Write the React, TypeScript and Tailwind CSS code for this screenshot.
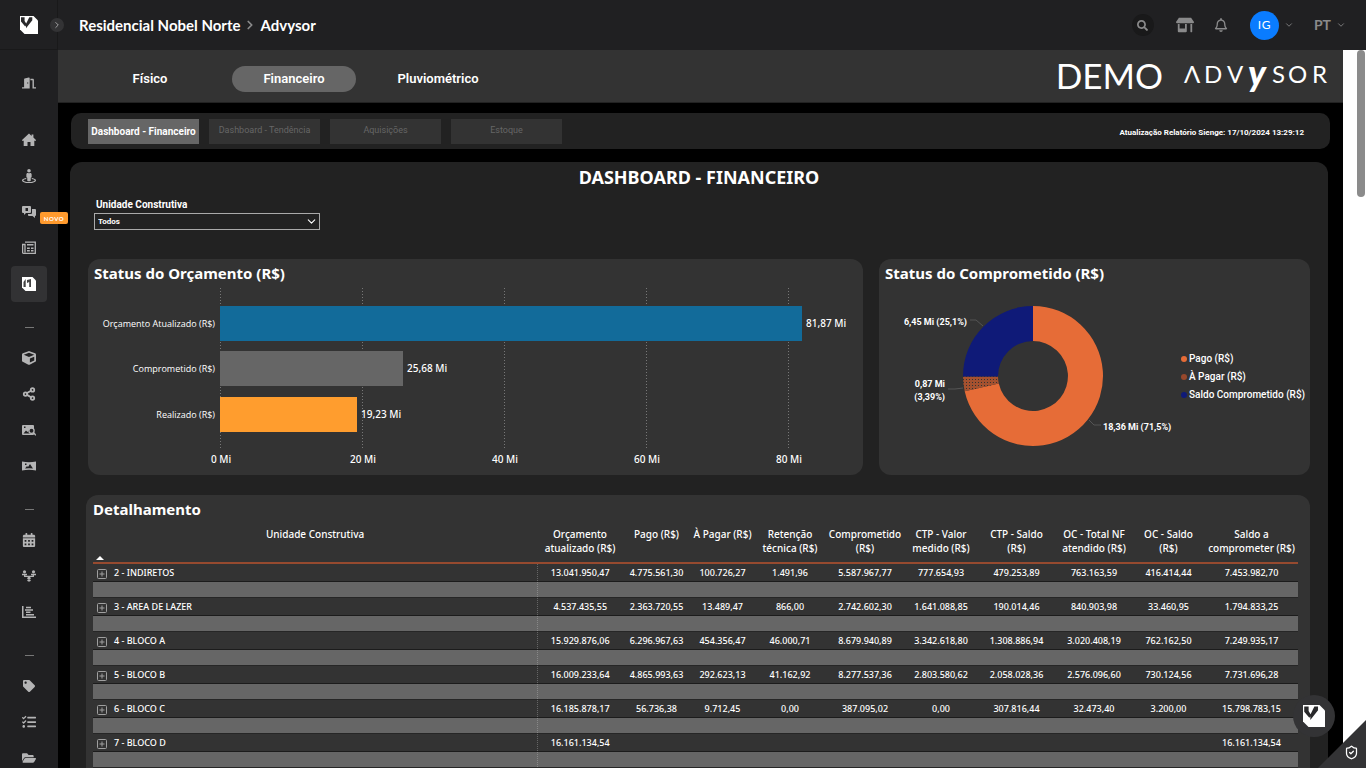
import type { ReactNode } from "react";
import {
  FaCalendarAlt,
  FaCube,
  FaDoorOpen,
  FaFolderOpen,
  FaRegBell,
  FaSearch,
  FaStoreAlt,
  FaStreetView,
  FaTag,
  FaTasks,
} from "react-icons/fa";
import { ChevronDown, ChevronRight, Share2, ShieldCheck } from "lucide-react";

const LogoMark = ({ size }: { size: number }) => (
  <svg width={size} height={size} viewBox="0 0 18 18" aria-hidden="true">
    <path d="M0 0h13.500L18 4.500V18H4.500L0 13.500z" fill="#fff" />
    <path d="M1 1.300h3.600v3.700L6.200 7.500 9.300 1.300H12.300v3L6 12.300V9.500L5.200 10.500 1 5.600z" fill="#29292b" />
  </svg>
);

const HomeIcon = () => (
  <svg width="14" height="14" viewBox="0 0 14 14" fill="currentColor" aria-hidden="true">
    <path d="M7 .6 9.600 3V1.500h1.800v3.100L14 7v.8h-1.700V13H8.500V9h-3v4H1.700V7.800H0V7z" />
  </svg>
);

const NewsIcon = () => (
  <svg width="14" height="14" viewBox="0 0 14 14" fill="none" stroke="currentColor" strokeWidth="1.300" aria-hidden="true">
    <path d="M3 1.200h10.300v11.200H1.500a.9.9 0 0 1-.9-.9V3.500H3v8" />
    <path d="M5 3.800h6.500M5 7.200h2.800M9 7.200h2.500M5 9.800h2.800M9 9.800h2.500" strokeWidth="1.500" />
  </svg>
);

const AdvysorIcon = () => (
  <svg width="14" height="14" viewBox="0 0 14 14" aria-hidden="true">
    <path d="M0 0h10.500L14 3.500V14H3.500L0 10.500z" fill="#fff" />
    <path d="M1.500 10V5l2.200-3v8zM5 3l4-1v8H7.200V5L5 6z" fill="#444" />
  </svg>
);

const ChatIcon = () => (
  <svg width="14" height="14" viewBox="0 0 14 14" fill="currentColor" aria-hidden="true">
    <path
      fillRule="evenodd"
      d="M1 1h7a1 1 0 0 1 1 1v5a1 1 0 0 1-1 1H4L2 10V8H1a1 1 0 0 1-1-1V2a1 1 0 0 1 1-1zm2.500 2v3h2.500V3z"
    />
    <path d="M10 4h3a1 1 0 0 1 1 1v5a1 1 0 0 1-1 1v2l-2.500-2H7a1 1 0 0 1-1-1V9h3a1 1 0 0 0 1-1z" />
  </svg>
);

const ImageSearchIcon = () => (
  <svg width="14" height="14" viewBox="0 0 14 14" aria-hidden="true">
    <rect y="2" width="12" height="10" rx="1" fill="currentColor" />
    <path d="M1.500 10.500 4 7.500l1.500 1.500L8 6v4.500zM2 3.500h1.500V5H2z" fill="#202022" />
    <circle cx="9.500" cy="7.800" r="2.600" fill="#202022" stroke="currentColor" strokeWidth="1.300" />
    <path d="m11.500 9.800 2.500 2.500" stroke="currentColor" strokeWidth="1.500" />
  </svg>
);

const PanoramaIcon = () => (
  <svg width="14" height="14" viewBox="0 0 14 14" aria-hidden="true">
    <path d="M0 2.500q7 1.600 14 0v9q-7-1.600-14 0z" fill="currentColor" />
    <path d="m3 9.500 2-2.500 1 1 2-3 3 4.500q-4-.4-8 0zM3 4.500h1.500V6H3z" fill="#202022" />
  </svg>
);

const NetworkIcon = () => (
  <svg width="14" height="14" viewBox="0 0 14 14" fill="currentColor" aria-hidden="true">
    <circle cx="2.500" cy="2.800" r="1.600" />
    <circle cx="11.500" cy="2.800" r="1.600" />
    <circle cx="7" cy="9.200" r="1.600" />
    <path d="M0 4.800h5v1.500H0zM9 4.800h5v1.500H9zM5 11h4l-1 1.500H6z" />
    <path d="M2.700 6v1.300h8.600V6" fill="none" stroke="currentColor" strokeWidth="1.300" />
  </svg>
);

const GanttIcon = () => (
  <svg width="14" height="14" viewBox="0 0 14 14" fill="currentColor" aria-hidden="true">
    <path d="M0 1h1.500v10.500H14V13H0zM4 1.800h5v1.500H4zM3 4.200h8v1.500H3zM4 6.600h4.500v1.500H4zM4 9h8v1.500H4z" />
  </svg>
);

type SideItem = { label: string; icon: ReactNode; active?: boolean; badge?: string };

const sideGroups: SideItem[][] = [
  [
    { label: "Início", icon: <HomeIcon /> },
    { label: "Visita virtual", icon: <FaStreetView size={14} /> },
    { label: "Mensagens", icon: <ChatIcon />, badge: "NOVO" },
    { label: "Notícias", icon: <NewsIcon /> },
    { label: "Advysor", icon: <AdvysorIcon />, active: true },
  ],
  [
    { label: "Modelos", icon: <FaCube size={14} /> },
    { label: "Compartilhar", icon: <Share2 size={14} strokeWidth={3} className="text-[#b4b4b5]" /> },
    { label: "Buscar imagens", icon: <ImageSearchIcon /> },
    { label: "Panoramas", icon: <PanoramaIcon /> },
  ],
  [
    { label: "Calendário", icon: <FaCalendarAlt size={14} /> },
    { label: "Equipe", icon: <NetworkIcon /> },
    { label: "Cronograma", icon: <GanttIcon /> },
  ],
  [
    { label: "Etiquetas", icon: <FaTag size={12} /> },
    { label: "Tarefas", icon: <FaTasks size={14} /> },
    { label: "Arquivos", icon: <FaFolderOpen size={14} /> },
  ],
];

const SideLink = ({ item }: { item: SideItem }) => (
  <a
    href="#"
    aria-label={item.label}
    className={
      item.active
        ? "relative flex size-9 items-center justify-center rounded-sm bg-[#323234]"
        : "relative flex size-9 items-center justify-center"
    }
  >
    {item.icon}
    {item.badge && (
      <span className="absolute top-[18px] left-[29px] z-10 flex h-3 w-7 items-center justify-center rounded-[2px] bg-[#ff9a2e] font-['Lato'] text-[6px] font-bold tracking-widest text-white">
        {item.badge}
      </span>
    )}
  </a>
);

const Sidebar = () => (
  <nav className="flex w-[58px] shrink-0 flex-col items-center bg-[#202022] pt-[15px] text-[#b4b4b5]">
    <a href="#" aria-label="Sair" className="mb-[21px] flex size-9 shrink-0 items-center justify-center">
      <FaDoorOpen size={14} />
    </a>
    {sideGroups.map((group, i) => (
      <div key={i} className="flex shrink-0 flex-col items-center">
        {i > 0 && (
          <div className="flex h-[38px] items-center pt-3">
            <span className="h-px w-[9px] bg-[#777]" />
          </div>
        )}
        {group.map((item) => (
          <SideLink key={item.label} item={item} />
        ))}
      </div>
    ))}
  </nav>
);

const Header = () => (
  <header className="flex h-[50px] shrink-0 items-center bg-[#202022] text-[#8a8a8b]">
    <div className="relative flex h-full w-[58px] items-center justify-center border-r border-b border-[#19191a]">
      <LogoMark size={18} />
      <button
        aria-label="Expandir menu"
        className="absolute top-[18px] -right-[7px] flex size-[14px] items-center justify-center rounded-full bg-[#333335] text-[#b4b4b5]"
      >
        <ChevronRight size={10} />
      </button>
    </div>
    <div className="ml-[21px] flex items-center gap-[3px] font-['Lato'] text-[15px] leading-5 font-bold text-white">
      <a href="#">Residencial Nobel Norte</a>
      <ChevronRight size={14} strokeWidth={3} className="text-[#8a8a8b]" />
      <span>Advysor</span>
    </div>
    <div className="mr-5 ml-auto flex items-center">
      <button aria-label="Buscar" className="flex size-[22px] items-center justify-center rounded-full bg-[#19191a]">
        <FaSearch size={11} />
      </button>
      <button aria-label="Loja" className="ml-[22px]">
        <FaStoreAlt size={18} />
      </button>
      <button aria-label="Notificações" className="ml-5">
        <FaRegBell size={14} />
      </button>
      <button aria-label="Conta" className="ml-[22px] flex items-center gap-[5px]">
        <span className="flex size-[29px] items-center justify-center rounded-full bg-[#0a7cff] font-['Lato'] text-xs tracking-wider text-white">
          IG
        </span>
        <ChevronDown size={10} />
      </button>
      <button className="ml-5 flex items-center gap-[5px] font-['Lato'] text-sm font-bold">
        PT
        <ChevronDown size={10} />
      </button>
    </div>
  </header>
);

const AdvysorLogo = () => (
  <svg
    width="146"
    height="52"
    viewBox="0 0 146 52"
    role="img"
    aria-label="Advysor"
    className="overflow-visible"
    fill="#fff"
    fontFamily="Lato, sans-serif"
    fontSize="24"
  >
    <text x="1 21 44" y="33">ΛDV</text>
    <text x="65" y="36" fontSize="36" fontWeight="900" fontStyle="italic">y</text>
    <text x="89 105 129" y="33">SOR</text>
  </svg>
);

const PageNav = () => (
  <div className="flex h-[53px] items-center border-b border-[#222] bg-[#333] pl-[30px] text-white">
    <div className="flex gap-5 pt-[5px] font-['Roboto'] text-[13px] font-semibold">
      <button className="h-[26px] w-[124px] pt-px">Físico</button>
      <button className="h-[26px] w-[124px] rounded-full bg-[#666] pt-px">Financeiro</button>
      <button className="h-[26px] w-[124px] pt-px">Pluviométrico</button>
    </div>
    <div className="mr-[14px] ml-auto flex items-center gap-5">
      <span className="pb-[3px] font-['Lato'] text-[35px] leading-[50px]">DEMO</span>
      <AdvysorLogo />
    </div>
  </div>
);

const SubTabs = () => (
  <div className="mt-[10px] mr-[13px] ml-[13px] flex h-9 items-center gap-[10px] rounded-[10px] bg-[#222] pr-[26px] pl-[17px] font-['Roboto'] text-[9px] text-[#666]">
    <button className="h-[25px] w-[111px] bg-[#666] text-[10px] font-bold text-white">Dashboard - Financeiro</button>
    <button className="h-[25px] w-[111px] bg-[#333]">Dashboard - Tendência</button>
    <button className="h-[25px] w-[111px] bg-[#333]">Aquisições</button>
    <button className="h-[25px] w-[111px] bg-[#333]">Estoque</button>
    <p className="ml-auto pt-1 text-[8px] font-bold text-white">Atualização Relatório Sienge: 17/10/2024 13:29:12</p>
  </div>
);

const ticks = [
  { x: 132, label: "0 Mi" },
  { x: 274, label: "20 Mi" },
  { x: 416, label: "40 Mi" },
  { x: 558, label: "60 Mi" },
  { x: 700, label: "80 Mi" },
];

const bars = [
  { y: 47, width: 582, color: "#126b9a", label: "Orçamento Atualizado (R$)", value: "81,87 Mi" },
  { y: 92, width: 183, color: "#666", label: "Comprometido (R$)", value: "25,68 Mi" },
  { y: 138, width: 137, color: "#ff9d2e", label: "Realizado (R$)", value: "19,23 Mi" },
];

const BudgetCard = () => (
  <section className="rounded-xl bg-[#333]">
    <h2 className="h-7 pl-[6px] text-[15px] leading-[29px] font-bold">Status do Orçamento (R$)</h2>
    <svg viewBox="0 28 775 188" className="block w-full text-[10px] font-medium" fill="#fff">
      {ticks.map((tick) => (
        <g key={tick.x}>
          <path d={`M${tick.x + 0.5} 29V189`} stroke="#777" strokeDasharray="1 2" />
          <text x={tick.x + 1} y="204" textAnchor="middle">
            {tick.label}
          </text>
        </g>
      ))}
      {bars.map((bar) => (
        <g key={bar.label}>
          <rect x="132" y={bar.y} width={bar.width} height="35" fill={bar.color} />
          <text x="127" y={bar.y + 21} textAnchor="end" className="font-['Open_Sans'] text-[9px]">
            {bar.label}
          </text>
          <text x={bar.width + 136} y={bar.y + 21}>
            {bar.value}
          </text>
        </g>
      ))}
    </svg>
  </section>
);

const legend = [
  { y: 100, color: "#e66c37", label: "Pago (R$)" },
  { y: 118, color: "#96482c", label: "À Pagar (R$)" },
  { y: 136, color: "#0f1a78", label: "Saldo Comprometido (R$)" },
];

const CommittedCard = () => (
  <section className="rounded-xl bg-[#333]">
    <h2 className="h-7 pl-[6px] text-[15px] leading-[29px] font-bold">Status do Comprometido (R$)</h2>
    <svg viewBox="0 28 431 188" className="block w-full font-['Roboto'] text-[9px] font-bold" fill="#fff">
      <defs>
        <pattern id="dots" width="3" height="3" patternUnits="userSpaceOnUse">
          <rect width="3" height="3" fill="#a5512f" />
          <rect width="1" height="1" fill="#333" />
        </pattern>
      </defs>
      <path d="M154 47A70 70 0 1 1 85.700 132.300L119.800 124.600A35 35 0 1 0 154 82z" fill="#e66c37" />
      <path d="M85.700 132.300A70 70 0 0 1 84 117.500H119A35 35 0 0 0 119.800 124.600z" fill="url(#dots)" />
      <path d="M84 117.500A70 70 0 0 1 154 47V82A35 35 0 0 0 119 117.500z" fill="#0f1a78" />
      <path d="M91 61h6l7 6M69 130h7l8-1M210 161l5 5h7" fill="none" stroke="#555" />
      <text x="88" y="66" textAnchor="end">6,45 Mi (25,1%)</text>
      <text x="66" y="128" textAnchor="end">0,87 Mi</text>
      <text x="66" y="141" textAnchor="end">(3,39%)</text>
      <text x="224" y="171">18,36 Mi (71,5%)</text>
      {legend.map((item) => (
        <g key={item.label}>
          <circle cx="305" cy={item.y} r="3" fill={item.color} />
          <text x="310" y={item.y + 3} className="text-[10px] font-medium">
            {item.label}
          </text>
        </g>
      ))}
    </svg>
  </section>
);

const columns = [
  "Orçamento\natualizado (R$)",
  "Pago (R$)",
  "À Pagar (R$)",
  "Retenção\ntécnica (R$)",
  "Comprometido\n(R$)",
  "CTP - Valor\nmedido (R$)",
  "CTP - Saldo\n(R$)",
  "OC - Total NF\natendido (R$)",
  "OC - Saldo\n(R$)",
  "Saldo a\ncomprometer (R$)",
];

const rows = [
  ["2 - INDIRETOS", "13.041.950,47", "4.775.561,30", "100.726,27", "1.491,96", "5.587.967,77", "777.654,93", "479.253,89", "763.163,59", "416.414,44", "7.453.982,70"],
  ["3 - AREA DE LAZER", "4.537.435,55", "2.363.720,55", "13.489,47", "866,00", "2.742.602,30", "1.641.088,85", "190.014,46", "840.903,98", "33.460,95", "1.794.833,25"],
  ["4 - BLOCO A", "15.929.876,06", "6.296.967,63", "454.356,47", "46.000,71", "8.679.940,89", "3.342.618,80", "1.308.886,94", "3.020.408,19", "762.162,50", "7.249.935,17"],
  ["5 - BLOCO B", "16.009.233,64", "4.865.993,63", "292.623,13", "41.162,92", "8.277.537,36", "2.803.580,62", "2.058.028,36", "2.576.096,60", "730.124,56", "7.731.696,28"],
  ["6 - BLOCO C", "16.185.878,17", "56.736,38", "9.712,45", "0,00", "387.095,02", "0,00", "307.816,44", "32.473,40", "3.200,00", "15.798.783,15"],
  ["7 - BLOCO D", "16.161.134,54", "", "", "", "", "", "", "", "", "16.161.134,54"],
];

const Row = ({ cells }: { cells: string[] }) => (
  <>
    <tr className="h-[18px] border-b border-[#1c1c1c]">
      <th scope="row" className="border-r border-dotted border-r-[#666] p-0 text-left font-medium">
        <div className="flex h-[17px] items-center gap-[7px] pl-1">
          <button aria-label="Expandir" className="mt-[3px]">
            <svg width="10" height="10" viewBox="0 0 10 10" fill="none" stroke="#a0a0a0">
              <rect x="0.5" y="0.5" width="9" height="9" rx="1" />
              <path d="M5 2.500v5M2.500 5h5" />
            </svg>
          </button>
          {cells[0]}
        </div>
      </th>
      {cells.slice(1).map((cell, i) => (
        <td key={i} className="p-0 text-center">
          {cell}
        </td>
      ))}
    </tr>
    <tr className="h-4 border-b border-[#262626] bg-[#666]">
      <td className="border-r border-dotted border-r-[#888] p-0" />
      {cells.slice(1).map((_, i) => (
        <td key={i} className="p-0" />
      ))}
    </tr>
  </>
);

const DetailCard = () => (
  <section className="mt-5 -ml-[2px] rounded-xl bg-[#333] pr-3 pb-6 pl-[7px]">
    <h2 className="h-8 text-[15px] leading-[29px] font-bold">Detalhamento</h2>
    <table className="w-full table-fixed border-collapse text-[9px] leading-[14px] font-medium">
      <colgroup>
        <col />
        <col className="w-[86px]" />
        <col className="w-[67px]" />
        <col className="w-[65px]" />
        <col className="w-[70px]" />
        <col className="w-[80px]" />
        <col className="w-[72px]" />
        <col className="w-[79px]" />
        <col className="w-[76px]" />
        <col className="w-[73px]" />
        <col className="w-[93px]" />
      </colgroup>
      <thead>
        <tr className="h-9 border-b-2 border-[#964a2f] align-top text-[10px] leading-[14px]">
          <th scope="col" className="p-0 font-medium">
            Unidade Construtiva
            <svg width="8" height="4" viewBox="0 0 8 4" className="mt-[15px] mb-[2px] ml-[3px] block" aria-hidden="true">
              <path d="M4 0l4 4H0z" fill="#fff" />
            </svg>
          </th>
          {columns.map((column) => (
            <th key={column} scope="col" className="p-0 font-medium whitespace-pre-line">
              {column}
            </th>
          ))}
        </tr>
      </thead>
      <tbody>
        {rows.map((cells) => (
          <Row key={cells[0]} cells={cells} />
        ))}
      </tbody>
    </table>
  </section>
);

const Dashboard = () => (
  <main className="mt-[13px] mr-[15px] ml-3 rounded-t-xl bg-[#222] px-[18px] pt-1">
    <h1 className="text-center text-[18px] leading-[22px] font-bold">DASHBOARD - FINANCEIRO</h1>
    <div className="mt-[9px] mb-[29px] ml-[6px] w-[226px] font-['Roboto'] font-bold">
      <label htmlFor="unidade" className="block pl-[2px] text-[10px] leading-[16px]">
        Unidade Construtiva
      </label>
      <div className="relative">
        <select
          id="unidade"
          className="block h-[17px] w-full appearance-none border border-[#aaa] bg-[#222] pl-[3px] text-[8px]"
        >
          <option>Todos</option>
        </select>
        <ChevronDown size={13} className="pointer-events-none absolute top-[2px] right-[2px]" />
      </div>
    </div>
    <div className="grid grid-cols-[775fr_431fr] gap-4">
      <BudgetCard />
      <CommittedCard />
    </div>
    <DetailCard />
  </main>
);

const App = () => {
  return (
    <div className="flex h-screen flex-col overflow-hidden bg-black">
      <Header />
      <div className="flex min-h-0 flex-1">
        <Sidebar />
        <div className="min-w-0 flex-1 overflow-hidden bg-black font-['Noto_Sans'] text-white">
          <PageNav />
          <SubTabs />
          <Dashboard />
        </div>
        <div className="flex w-[23px] shrink-0 justify-end bg-white pr-px">
          <div className="h-[147px] w-2 rounded-full bg-[#8b8b8b]" />
        </div>
      </div>

      {/* floating help + privacy corner */}
      <button
        aria-label="Ajuda"
        className="fixed right-[31px] bottom-[31px] flex size-[42px] items-center justify-center rounded-full bg-[#333335]"
      >
        <LogoMark size={22} />
      </button>
      <button
        aria-label="Privacidade"
        className="fixed right-0 bottom-0 flex size-12 items-end justify-end bg-[#333335] pr-[7px] pb-2 text-white [clip-path:polygon(100%_0,100%_100%,0_100%)]"
      >
        <ShieldCheck size={15} />
      </button>
    </div>
  );
};

export default App;
